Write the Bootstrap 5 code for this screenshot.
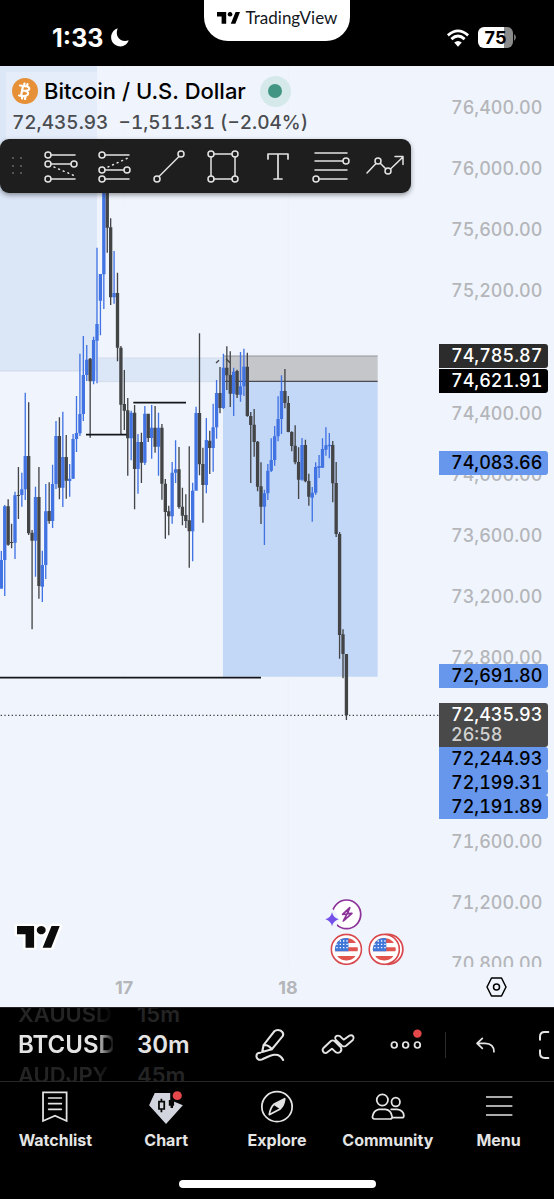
<!DOCTYPE html>
<html lang="en">
<head>
<meta charset="utf-8">
<meta name="viewport" content="width=device-width, initial-scale=1">
<title>Bitcoin / U.S. Dollar</title>
<link href="https://cdn.jsdelivr.net/npm/bootstrap@5.3.0/dist/css/bootstrap.min.css" rel="stylesheet">
<style>
  body { background: #000; font-family: Inter, "Liberation Sans", sans-serif; overflow-x: hidden; }
  svg { display: block; overflow: visible; }
  .bare { background: none; border: 0; padding: 0; color: inherit; }
  .ink { fill: none; stroke: currentColor; stroke-linecap: round; stroke-linejoin: round; }

  .status { height: 66px; color: #fff; }
  .clock { font-size: 25px; line-height: 32px; font-weight: 700; }
  .island { background: #fff; color: #131722; height: 41px; width: 146px; border-radius: 0 0 24px 24px; font-family: Lato, Inter, sans-serif; font-size: 17px; line-height: 20px; padding-bottom: 6px; gap: 6px; }
  .side { flex: 1 1 0; padding: 9px 38px 0 52px; }
  .battery { height: 21px; width: 35px; border-radius: 6px; background: linear-gradient(90deg, #fff 75%, #8b8b8b 75%); color: #000; font-size: 18px; line-height: 21px; font-weight: 700; }

  .board { display: grid; grid-template-columns: minmax(0, 1fr) 115px; background: #f0f5fd; color: #000; }
  .plot { height: 901px; overflow: hidden; }
  .plot > .candles { width: 100%; height: 901px; }
  .legend-box { top: 9px; left: 12px; }
  .pair { font-size: 22px; line-height: 32px; font-weight: 500; margin: 0 0 0 6px; }
  .quote { font-size: 19px; line-height: 28px; font-weight: 500; color: #4a4c50; margin: 2px 0 0; font-variant-numeric: tabular-nums; }
  .live { width: 31px; height: 31px; border-radius: 50%; background: #d5e9eb; margin-left: 14px; }
  .live i { width: 14px; height: 14px; border-radius: 50%; background: #429582; }
  .tools { top: 73px; left: 0; height: 54px; background: #1e1e1e; color: #e4e4e4; border-radius: 9px; box-shadow: 0 2px 5px #0006; }
  .tools .grip { width: 33px; }
  .tools button { width: 54px; }
  .tools button:last-child { padding-right: 1px; }
  .brand { left: 17px; top: 858px; }
  .events { right: 34px; top: 831px; }

  .scale { height: 901px; overflow: hidden; font-size: 18px; font-weight: 500; font-variant-numeric: tabular-nums; }
  .scale ol { list-style: none; margin: 0; padding: 11px 0 0 12px; height: 929px; color: #b4b6ba; display: grid; grid-auto-rows: 1fr; align-items: center; line-height: 24px; }
  .tag { left: 0; width: 109px; top: calc((76400 - var(--p)) * .1529px + 31px); }
  .tag div { height: 24px; line-height: 24px; padding-left: 12px; border-radius: 0 3px 3px 0; }
  .t-blue { background: #6697ec; color: #000; }
  .t-black { background: #000; color: #fff; }
  .t-slate { background: #2c2c2c; color: #fff; }
  .tag .t-last { background: #494949; color: #fff; height: 44px; line-height: 20px; padding-top: 2px; }
  .t-last span { color: #d0d0d0; }
  .days { height: 40px; padding-left: 42px; font-size: 18px; font-weight: 700; color: #b4b6ba; }
  .days span { width: 164px; text-align: center; }

  .dock { height: 75px; color: #e4e4e4; overflow: hidden; border-top: 1px solid #222; border-bottom: 1px solid #262626; }
  .wheel { font-size: 24px; font-weight: 600; line-height: 30px; text-align: left; flex: none; overflow: hidden; }
  .wheel small { display: block; font-size: 22px; line-height: 31px; color: #242424; }
  .w-symbol { width: 95px; margin-left: 18px; -webkit-mask: linear-gradient(90deg, #000 78px, transparent 97px); mask: linear-gradient(90deg, #000 78px, transparent 97px); }
  .w-interval { width: 99px; margin-left: 24px; }
  .dock .act { width: 68px; height: 72px; flex: none; }
  .rule { width: 1px; height: 26px; background: #2c2c2c; margin: 0 5px; flex: none; }
  .tabs { color: #e4e4e4; padding-top: 8px; }
  .tabs a { color: inherit; text-decoration: none; font-size: 16px; line-height: 24px; font-weight: 700; flex: 1 1 0; min-width: 0; }
  .home { width: 197px; height: 8px; border-radius: 4px; background: #fff; margin: 28px auto 11px; }
</style>
</head>
<body>
<svg width="0" height="0" class="position-absolute" aria-hidden="true">
  <symbol id="tv" viewBox="0 0 120 66" preserveAspectRatio="none"><path d="M0 0H48V65H24V25H0ZM72 65L97 0H120L96 65ZM68 0a12.500 12.500 0 1 0 .1 0Z"/></symbol>
  <symbol id="usa" viewBox="0 0 96 96" preserveAspectRatio="none">
    <circle cx="48" cy="48" r="45" fill="#fff" stroke="#d8484c" stroke-width="5"/>
    <clipPath id="disc"><circle cx="48" cy="48" r="34"/></clipPath>
    <g clip-path="url(#disc)"><path fill="#fff" d="M0 0h96v96H0z"/><path fill="#e0564f" d="M0 15h96v14H0zM0 42h96v12H0zM0 68h96v14H0z"/><path fill="#3f78d8" d="M0 10h54v44H0z"/>
    <path d="M18 23h34M18 33h34M18 43h34" stroke="#fff" stroke-width="4" stroke-dasharray="4 6"/></g>
  </symbol>
</svg>

<header class="status d-flex">
  <div class="side d-flex align-items-center gap-2">
    <span class="clock">1:33</span>
    <svg width="18" height="19" viewBox="0 0 54 57" fill="#fff"><path d="M20 1C-6 10-6 46 20 54C35 59 49 50 53 37C30 45 10 27 20 1Z"/></svg>
  </div>
  <div class="island d-flex align-items-center justify-content-center">
    <svg width="23" height="12"><use href="#tv"/></svg><span>TradingView</span>
  </div>
  <div class="side d-flex align-items-center justify-content-end gap-2">
    <svg width="24" height="18" viewBox="0 0 72 57" fill="none" stroke="#fff" stroke-width="9"><path d="M4 20Q36-8 68 20M15 32Q36 13 57 32"/><path fill="#fff" stroke="none" d="M24 43Q36 33 48 43L36 56Z"/></svg>
    <div class="d-flex align-items-center"><div class="battery text-center">75</div><svg width="3" height="7"><path d="M1 0Q5 3 1 7Z" fill="#777"/></svg></div>
  </div>
</header>

<main class="board">
  <section class="plot position-relative">
    <svg class="candles" viewBox="0 198 1317 2703" preserveAspectRatio="xMaxYMin slice" role="img" aria-label="Bitcoin price, 30 minute candles">
      <path fill="#dbe6f7" d="M-900 198H291V1113H-900Z"/>
      <path stroke="#c6d2e6" stroke-width="2" d="M-900 1113H240"/>
      <path fill="#e5edfa" d="M18 216H291V420H18Z"/>
      <path fill="#dbe6f7" d="M294 1073H669V1146H294Z"/>
      <path stroke="#d0d8e4" stroke-width="2" d="M294 1074H669M294 1145H669"/>
      <path stroke="#ebf1fa" stroke-width="2" d="M371 198V2900M864 198V2900"/>
      <path fill="#c4c6ca" d="M669 1068H1133V1145H669Z"/>
      <path fill="#c3d7f6" d="M669 1145H1133V2030H669Z"/>
      <path stroke="#94969a" stroke-width="3" d="M669 1068H1133"/>
      <path stroke="#4a4c52" stroke-width="4" d="M669 1144H1133"/>
      <g id="bars"></g>
      <path stroke="#14161a" stroke-width="5" d="M258 1304H380M400 1208H558M-900 2033H783"/>
      <path stroke="#444" stroke-width="4" fill="none" d="M648 1089L657 1081M678 1076L690 1088"/>
      <path stroke="#444" stroke-width="4" stroke-dasharray="4 7" d="M-900 2146H1317"/>
    </svg>

    <div class="legend-box position-absolute">
      <div class="d-flex align-items-center">
        <svg width="26" height="26" viewBox="0 0 26 26"><circle cx="13" cy="13" r="13" fill="#e69138"/><path class="ink" style="color:#fff" stroke-width="2.200" d="M11 8L9 18M8 7.500L15 8.500Q18 9.500 17 11.500Q16 13.200 10 12.500M10 12.500Q17 13 16 16Q15 19 7 17.500M12.500 5.500L12 8M15.500 6L15 8.500M10.500 18L10 20.500M13.500 18.500L13 21"/></svg>
        <h1 class="pair">Bitcoin / U.S. Dollar</h1>
        <span class="live d-flex align-items-center justify-content-center"><i></i></span>
      </div>
      <p class="quote">72,435.93&nbsp; −1,511.31 (−2.04%)</p>
    </div>

    <div class="tools position-absolute d-flex align-items-center" role="toolbar" aria-label="Drawing tools">
      <svg class="grip" height="18" viewBox="0 0 33 18" fill="#555"><path d="M12 0h2v2h-2zM20 0h2v2h-2zM12 8h2v2h-2zM20 8h2v2h-2zM12 15h2v2h-2zM20 15h2v2h-2z"/></svg>
      <button class="bare d-flex justify-content-center" aria-label="Short position"><svg class="ink" width="36" height="36" stroke-width="1.500"><path d="M9 7H33M9 16H29M9 31H33"/><path stroke-dasharray="1 4" d="M12 19L33 28"/><circle cx="6" cy="7" r="3"/><circle cx="6" cy="16" r="3"/><circle cx="32" cy="16" r="3"/><circle cx="6" cy="31" r="3"/></svg></button>
      <button class="bare d-flex justify-content-center" aria-label="Long position"><svg class="ink" width="36" height="36" stroke-width="1.500"><path d="M9 7H33M9 22H28M9 31H33"/><path stroke-dasharray="1 4" d="M12 19L32 10"/><circle cx="6" cy="7" r="3"/><circle cx="6" cy="22" r="3"/><circle cx="31" cy="22" r="3"/><circle cx="6" cy="31" r="3"/></svg></button>
      <button class="bare d-flex justify-content-center" aria-label="Trend line"><svg class="ink" width="36" height="36" stroke-width="1.500"><path d="M9 28.500L29 8.500"/><circle cx="7" cy="31" r="3"/><circle cx="31" cy="6" r="3"/></svg></button>
      <button class="bare d-flex justify-content-center" aria-label="Rectangle"><svg class="ink" width="36" height="36" stroke-width="1.500"><path d="M10 6H28M10 31H28M7 9V28M31 9V28"/><circle cx="7" cy="6" r="3"/><circle cx="31" cy="6" r="3"/><circle cx="7" cy="31" r="3"/><circle cx="31" cy="31" r="3"/></svg></button>
      <button class="bare d-flex justify-content-center" aria-label="Text"><svg class="ink" width="36" height="36" stroke-width="1.700"><path d="M10 11V6H30V11M20 6V31M16 31H24"/></svg></button>
      <button class="bare d-flex justify-content-center" aria-label="Fib retracement"><svg class="ink" width="36" height="36" stroke-width="1.500"><path d="M3 5H35M3 13H31M3 22H35M7 31H35"/><circle cx="34" cy="13" r="3"/><circle cx="4" cy="31" r="3"/></svg></button>
      <button class="bare d-flex justify-content-center" aria-label="Path"><svg class="ink" width="36" height="36" stroke-width="1.500"><path d="M1 25L10 15.500M14.500 15.500L20 21M24.500 21L37 9M29 8.500H37V16.500"/><circle cx="12" cy="13" r="3"/><circle cx="22" cy="23" r="3"/></svg></button>
    </div>

    <svg class="brand position-absolute" width="47" height="26" viewBox="0 0 132 78" preserveAspectRatio="none"><path stroke="#fff" stroke-width="14" stroke-linejoin="round" fill="#0c0c0c" paint-order="stroke" d="M0 6H48V71H24V31H0ZM72 71L97 6H120L96 71ZM68 6a12.500 12.500 0 1 0 .1 0Z"/></svg>

    <div class="events position-absolute">
      <svg width="85" height="69" viewBox="0 0 240 207" preserveAspectRatio="none">
        <ellipse cx="75" cy="52" rx="40" ry="43" fill="#fff" stroke="#8b3198" stroke-width="5"/>
        <path d="M30 34L44 42L53 66L48 84L44 92L20 86Z" fill="#f0f5fd"/>
        <path class="ink" style="color:#8b3198" stroke-width="5" d="M84 32L64 52L76 51L66 72L90 49L77 50Z"/>
        <path fill="#7450e8" d="M34 46Q38 63 53 67Q38 71 34 88Q30 71 15 67Q30 63 34 46Z"/>
        <use href="#usa" x="29" y="109" width="91" height="96"/>
        <ellipse cx="192" cy="157" rx="42" ry="45" fill="#fff" stroke="#d8484c" stroke-width="5"/>
        <use href="#usa" x="136" y="109" width="91" height="96"/>
      </svg>
    </div>
  </section>

  <aside class="scale position-relative">
    <ol>
      <li>76,400.00</li><li>76,000.00</li><li>75,600.00</li><li>75,200.00</li><li>&nbsp;</li>
      <li>74,400.00</li><li>74,000.00</li><li>73,600.00</li><li>73,200.00</li><li>72,800.00</li>
      <li>&nbsp;</li><li>&nbsp;</li><li>71,600.00</li><li>71,200.00</li><li>70,800.00</li>
    </ol>
    <div class="tag position-absolute" style="--p:74785.87"><div class="t-slate">74,785.87</div></div>
    <div class="tag position-absolute" style="--p:74621.91"><div class="t-black">74,621.91</div></div>
    <div class="tag position-absolute" style="--p:74083.66"><div class="t-blue">74,083.66</div></div>
    <div class="tag position-absolute" style="--p:72691.80"><div class="t-blue">72,691.80</div></div>
    <div class="tag position-absolute" style="--p:72435.93">
      <div class="t-last">72,435.93<br><span>26:58</span></div>
      <div class="t-blue">72,244.93</div><div class="t-blue">72,199.31</div><div class="t-blue">72,191.89</div>
    </div>
  </aside>

  <div class="days d-flex align-items-center"><span>17</span><span>18</span></div>
  <button class="bare d-flex align-items-center justify-content-center" aria-label="Chart settings"><svg class="ink" width="21" height="20" viewBox="0 0 21 20" stroke-width="1.500"><path d="M5.500 1H15.500L20 10L15.500 19H5.500L1 10Z"/><circle cx="10.500" cy="10" r="3"/></svg></button>
</main>

<section class="dock d-flex align-items-center">
  <button class="bare wheel w-symbol"><small>XAUUSD</small>BTCUSD<small>AUDJPY</small></button>
  <button class="bare wheel w-interval"><small>15m</small>30m<small>45m</small></button>
  <button class="bare act d-flex align-items-center justify-content-center" aria-label="Draw"><svg class="ink" width="32" height="34" viewBox="720 80 90 102" preserveAspectRatio="none" stroke-width="6"><path d="M743 152L747 131L777 90Q785 83 795 88Q805 95 801 104L770 144ZM747 131Q762 130 770 144M738 154Q726 154 727 166Q730 179 743 174C765 163 789 148 802 176"/></svg></button>
  <button class="bare act d-flex align-items-center justify-content-center" aria-label="Indicators"><svg class="ink" width="34" height="30" viewBox="907 88 96 90" preserveAspectRatio="none" stroke-width="5.500"><path d="M912 151Q910 146 914 142L935 121Q940 117 945 121L963 140Q967 148 961 154Q955 159 949 155L938 144L922 157Q916 159 912 151ZM948 108Q954 102 961 107L971 117L987 105Q994 102 998 107Q1001 113 997 118L977 136Q971 139 966 135L949 118Q945 113 948 108Z"/></svg></button>
  <button class="bare act d-flex align-items-center justify-content-center" aria-label="More"><svg width="32" height="38" viewBox="1104 75 90 114" preserveAspectRatio="none"><g class="ink" stroke-width="5"><ellipse cx="1116" cy="132" rx="8" ry="9"/><ellipse cx="1148" cy="132" rx="8" ry="9"/><ellipse cx="1181" cy="132" rx="8" ry="9"/></g><ellipse cx="1181" cy="98" rx="12" ry="12.500" fill="#e5484a"/></svg></button>
  <span class="rule"></span>
  <button class="bare act d-flex align-items-center justify-content-center" aria-label="Undo"><svg class="ink" width="19" height="16" viewBox="1346 108 54 48" preserveAspectRatio="none" stroke-width="5"><path d="M1364 112L1349 127L1364 142M1350 127H1372Q1397 128 1397 152"/></svg></button>
  <button class="bare act d-flex align-items-center justify-content-center" aria-label="Full screen"><svg class="ink" width="28" height="28" viewBox="0 0 84 84" stroke-width="6"><path d="M3 26V17Q3 3 17 3H28M3 58V67Q3 81 17 81H28M58 3H67Q81 3 81 17V26M81 58V67Q81 81 67 81H58"/></svg></button>
</section>

<nav class="tabs d-flex" aria-label="Main">
  <a href="#" class="d-flex flex-column align-items-center gap-1"><svg class="ink" width="38" height="34" viewBox="103 30 108 102" preserveAspectRatio="none" stroke-width="5"><path stroke-linejoin="miter" d="M123 37H190V123L157 107L123 123ZM139 54H175M139 71H175M139 88H175"/></svg>Watchlist</a>
  <a href="#" class="d-flex flex-column align-items-center gap-1"><svg width="38" height="34" viewBox="416 30 108 102" preserveAspectRatio="none"><path fill="#d3d5de" d="M438 39H482V60L518 76L470 132L422 76Z"/><path fill="none" stroke="#050505" stroke-width="5" d="M450 65H465V87H450ZM457 56V65M457 87V97"/><path fill="#050505" d="M478 60H493V77H490V84H483V77H478Z"/><circle cx="502" cy="47" r="16" fill="#000"/><circle cx="502" cy="47" r="13" fill="#e5484a"/></svg>Chart</a>
  <a href="#" class="d-flex flex-column align-items-center gap-1"><svg class="ink" width="38" height="34" viewBox="730 30 108 102" preserveAspectRatio="none" stroke-width="5"><ellipse cx="784" cy="80" rx="43" ry="45"/><path d="M762 104Q765 83 775 73L806 56Q804 76 793 87Z"/><path fill="currentColor" stroke="none" d="M806 56L774 74L793 88Q803 78 806 56Z"/></svg>Explore</a>
  <a href="#" class="d-flex flex-column align-items-center gap-1"><svg class="ink" width="38" height="34" viewBox="1044 30 108 102" preserveAspectRatio="none" stroke-width="5"><ellipse cx="1082" cy="60" rx="16" ry="17"/><ellipse cx="1120" cy="66" rx="12" ry="13"/><path d="M1072 88H1091Q1107 90 1110 111Q1110 117 1104 117H1060Q1053 117 1054 109Q1057 91 1072 88ZM1107 88H1124Q1142 90 1143 107Q1143 113 1137 113H1111"/></svg>Community</a>
  <a href="#" class="d-flex flex-column align-items-center gap-1"><svg class="ink" width="38" height="34" viewBox="1356 30 108 102" preserveAspectRatio="none" stroke-width="5"><path stroke-linecap="butt" d="M1373 51H1448M1373 78H1448M1373 105H1448"/></svg>Menu</a>
</nav>
<div class="home"></div>

<script src="https://cdn.jsdelivr.net/npm/bootstrap@5.3.0/dist/js/bootstrap.bundle.min.js"></script>
<script>
  // Each session: base level, then candles as direction, wick top, body top, body bottom, wick bottom.
  const sessions = [
    [1110, `b543,570,656,656 b405,409,570,678 k388,409,524,527 k461,516,519,535 b365,376,518,567 k291,375,378,447
      b308,358,375,410 b68,258,358,390 k97,258,490,495 k480,488,512,778 b350,381,512,620 k291,381,648,686
      b542,585,650,696 b342,424,585,627 k337,423,453,461 b284,342,453,474 b153,198,342,357 k142,198,353,388
      b125,261,353,411 k195,261,332,386 b282,326,333,380 b192,207,326,327 b78,189,207,246`],
    [540, `b521,702,760,768 b468,585,702,723 b495,539,585,603 k534,536,604,773 b470,480,604,613 b203,432,482,610
      b282,282,362,466 b-60,-60,283,387 k-60,-60,143,218 k115,142,352,375 b213,339,352,371 k278,339,503,544
      k498,503,674,763 k570,672,692,750`],
    [1110, `k84,121,205,317 b122,128,205,271 k105,128,297,418 b192,216,297,371 k188,216,278,339 b108,131,278,285
      k131,131,204,216 b105,173,204,266 k108,173,230,248 b128,173,230,317 k162,173,341,389 k327,341,426,506
      k407,424,439,496 b276,308,439,461 b211,298,308,339 k231,298,411,416 k353,410,437,466 k373,435,453,474
      k229,451,484,593 b338,362,484,574 b110,129,362,362`],
    [960, `k40,279,433,466 k383,432,495,608 b294,360,495,520 k332,362,384,462 b251,322,384,455 b180,219,322,356
      k141,219,264,280 b101,143,264,267 k79,143,166,210 k94,165,221,261 b143,155,221,288 k149,153,224,234
      b96,199,224,245 b86,140,199,228 k98,140,288,290 k276,288,315,489 k267,314,366,410 k363,365,500,514
      k427,499,560,612 b509,520,560,675 b432,452,520,540 b355,420,452,456 b318,349,420,437 b229,297,349,364
      b166,213,297,342 k147,213,249,265 k228,249,336,337 k334,336,378,394 k316,377,427,433 k382,426,479,537
      b354,375,479,482 k359,375,484,487 k461,483,530,557 b501,518,533,605 b427,441,518,524 b405,438,444,474
      b355,387,443,444 b322,376,389,407 b339,374,379,415 k363,375,490,547 k426,489,642,651`],
    [1560, `k36,42,345,416 k328,343,402,475 k402,402,586,600`]
  ];
  let i = 0, out = '';
  for (const [base, list] of sessions) {
    for (const c of list.split(/\s+/)) {
      const [h, t, b, l] = c.slice(1).split(',').map(v => +v + base);
      const x = 4 + 10.25 * i++, color = c[0] === 'b' ? '#4173e3' : '#434446';
      out += `<path fill="${color}" d="M${x - 2} ${h}h4V${l}h-4ZM${x - 5} ${t}h10V${b}h-10Z"/>`;
    }
  }
  document.getElementById('bars').innerHTML = out;
</script>
</body>
</html>
